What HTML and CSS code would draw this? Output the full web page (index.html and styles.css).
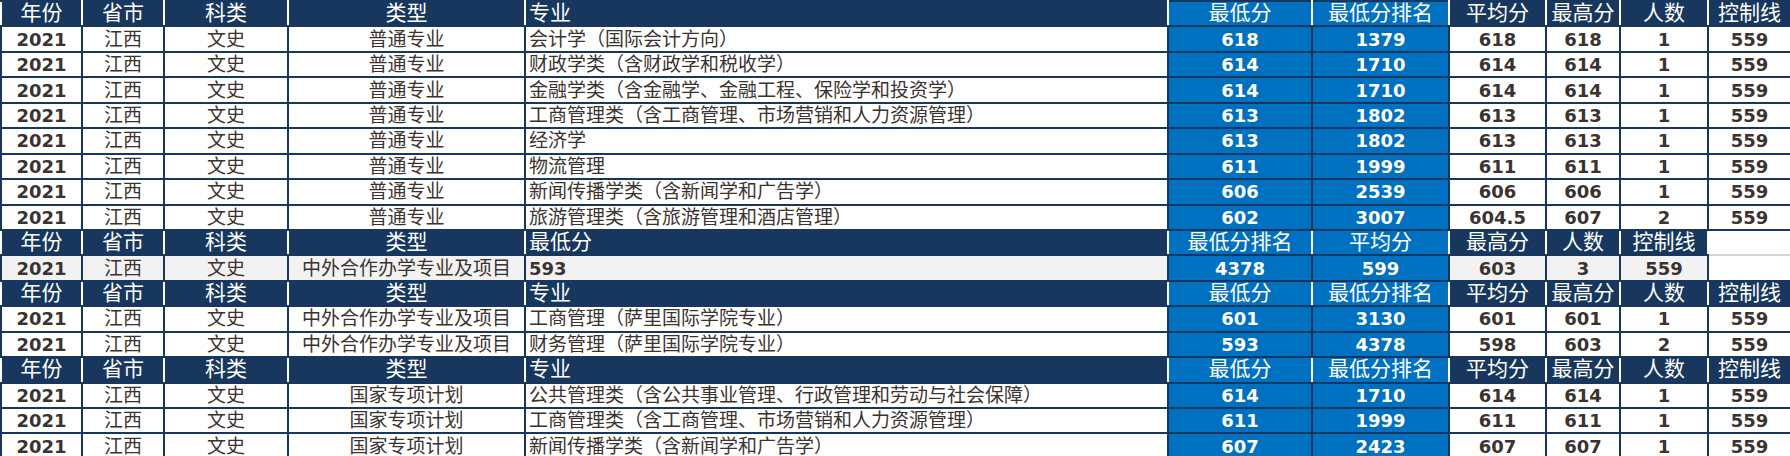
FILE: index.html
```html
<!DOCTYPE html>
<html lang="zh-CN">
<head>
<meta charset="utf-8">
<title>录取分数</title>
<link rel="stylesheet" href="styles.css">
</head>
<body>
<table class="grid">
<colgroup>
<col class="c1"><col class="c2"><col class="c3"><col class="c4"><col class="c5"><col class="c6"><col class="c7"><col class="c8"><col class="c9"><col class="c10"><col class="c11">
</colgroup>
<tbody>
<tr class="hr"><td>年份</td><td>省市</td><td>科类</td><td>类型</td><td class="l">专业</td><td class="hb">最低分</td><td class="hb">最低分排名</td><td>平均分</td><td>最高分</td><td>人数</td><td>控制线</td></tr>
<tr><td class="n">2021</td><td>江西</td><td>文史</td><td>普通专业</td><td class="l">会计学（国际会计方向）</td><td class="b">618</td><td class="b">1379</td><td class="n">618</td><td class="n">618</td><td class="n">1</td><td class="n">559</td></tr>
<tr><td class="n">2021</td><td>江西</td><td>文史</td><td>普通专业</td><td class="l">财政学类（含财政学和税收学）</td><td class="b">614</td><td class="b">1710</td><td class="n">614</td><td class="n">614</td><td class="n">1</td><td class="n">559</td></tr>
<tr><td class="n">2021</td><td>江西</td><td>文史</td><td>普通专业</td><td class="l">金融学类（含金融学、金融工程、保险学和投资学）</td><td class="b">614</td><td class="b">1710</td><td class="n">614</td><td class="n">614</td><td class="n">1</td><td class="n">559</td></tr>
<tr><td class="n">2021</td><td>江西</td><td>文史</td><td>普通专业</td><td class="l">工商管理类（含工商管理、市场营销和人力资源管理）</td><td class="b">613</td><td class="b">1802</td><td class="n">613</td><td class="n">613</td><td class="n">1</td><td class="n">559</td></tr>
<tr><td class="n">2021</td><td>江西</td><td>文史</td><td>普通专业</td><td class="l">经济学</td><td class="b">613</td><td class="b">1802</td><td class="n">613</td><td class="n">613</td><td class="n">1</td><td class="n">559</td></tr>
<tr><td class="n">2021</td><td>江西</td><td>文史</td><td>普通专业</td><td class="l">物流管理</td><td class="b">611</td><td class="b">1999</td><td class="n">611</td><td class="n">611</td><td class="n">1</td><td class="n">559</td></tr>
<tr><td class="n">2021</td><td>江西</td><td>文史</td><td>普通专业</td><td class="l">新闻传播学类（含新闻学和广告学）</td><td class="b">606</td><td class="b">2539</td><td class="n">606</td><td class="n">606</td><td class="n">1</td><td class="n">559</td></tr>
<tr><td class="n">2021</td><td>江西</td><td>文史</td><td>普通专业</td><td class="l">旅游管理类（含旅游管理和酒店管理）</td><td class="b">602</td><td class="b">3007</td><td class="n">604.5</td><td class="n">607</td><td class="n">2</td><td class="n">559</td></tr>

<tr class="hr"><td>年份</td><td>省市</td><td>科类</td><td>类型</td><td class="l">最低分</td><td class="hb">最低分排名</td><td class="hb">平均分</td><td>最高分</td><td>人数</td><td>控制线</td><td class="w"></td></tr>
<tr class="gr"><td class="n">2021</td><td>江西</td><td>文史</td><td>中外合作办学专业及项目</td><td class="l n">593</td><td class="b">4378</td><td class="b">599</td><td class="n">603</td><td class="n">3</td><td class="n">559</td><td class="w"></td></tr>

<tr class="hr"><td>年份</td><td>省市</td><td>科类</td><td>类型</td><td class="l">专业</td><td class="hb">最低分</td><td class="hb">最低分排名</td><td>平均分</td><td>最高分</td><td>人数</td><td>控制线</td></tr>
<tr><td class="n">2021</td><td>江西</td><td>文史</td><td>中外合作办学专业及项目</td><td class="l">工商管理（萨里国际学院专业）</td><td class="b">601</td><td class="b">3130</td><td class="n">601</td><td class="n">601</td><td class="n">1</td><td class="n">559</td></tr>
<tr><td class="n">2021</td><td>江西</td><td>文史</td><td>中外合作办学专业及项目</td><td class="l">财务管理（萨里国际学院专业）</td><td class="b">593</td><td class="b">4378</td><td class="n">598</td><td class="n">603</td><td class="n">2</td><td class="n">559</td></tr>

<tr class="hr"><td>年份</td><td>省市</td><td>科类</td><td>类型</td><td class="l">专业</td><td class="hb">最低分</td><td class="hb">最低分排名</td><td>平均分</td><td>最高分</td><td>人数</td><td>控制线</td></tr>
<tr><td class="n">2021</td><td>江西</td><td>文史</td><td>国家专项计划</td><td class="l">公共管理类（含公共事业管理、行政管理和劳动与社会保障）</td><td class="b">614</td><td class="b">1710</td><td class="n">614</td><td class="n">614</td><td class="n">1</td><td class="n">559</td></tr>
<tr><td class="n">2021</td><td>江西</td><td>文史</td><td>国家专项计划</td><td class="l">工商管理类（含工商管理、市场营销和人力资源管理）</td><td class="b">611</td><td class="b">1999</td><td class="n">611</td><td class="n">611</td><td class="n">1</td><td class="n">559</td></tr>
<tr><td class="n">2021</td><td>江西</td><td>文史</td><td>国家专项计划</td><td class="l">新闻传播学类（含新闻学和广告学）</td><td class="b">607</td><td class="b">2423</td><td class="n">607</td><td class="n">607</td><td class="n">1</td><td class="n">559</td></tr>
</tbody>
</table>
</body>
</html>
```

FILE: styles.css
```css
html, body {
  margin: 0;
  padding: 0;
  background: #ffffff;
}
body {
  width: 1790px;
  height: 456px;
  overflow: hidden;
}
.grid {
  border-collapse: collapse;
  table-layout: fixed;
  width: 1790px;
}
.c1 { width: 81px; }
.c2 { width: 82px; }
.c3 { width: 124px; }
.c4 { width: 237px; }
.c5 { width: 643px; }
.c6 { width: 144px; }
.c7 { width: 137px; }
.c8 { width: 97px; }
.c9 { width: 74px; }
.c10 { width: 88px; }
.c11 { width: 83px; }

.grid tr {
  height: 25.45px;
}
.grid td {
  padding: 0;
  border: 2px solid #17375e;
  text-align: center;
  vertical-align: middle;
  white-space: nowrap;
  overflow: hidden;
  font-family: "Liberation Serif", "Noto Sans CJK SC", serif;
  font-size: 19px;
  line-height: 21px;
  color: #3b3330;
  background: #ffffff;
}
.grid td.l {
  text-align: left;
  padding-left: 3px;
}
.grid td.n {
  font-family: "DejaVu Sans", "Noto Sans CJK SC", sans-serif;
  font-weight: bold;
  font-size: 18px;
}
.grid td.b {
  background: #0070c0;
  color: #ffffff;
  font-family: "DejaVu Sans", "Noto Sans CJK SC", sans-serif;
  font-weight: bold;
  font-size: 18px;
}
.grid .hr td {
  background: #17375e;
  color: #ffffff;
  font-size: 21px;
  border-left-color: #ffffff;
  border-right-color: #ffffff;
}
.grid .hr td.hb {
  background: #0070c0;
}
.grid .gr td {
  background: #f2f2f2;
}
.grid .gr td.b {
  background: #0070c0;
}
.grid .hr td.w,
.grid .gr td.w {
  background: #ffffff;
  border-right-color: #ffffff;
}
.grid .hr td.w {
  border-bottom-color: #d4d4d4;
}
.grid .gr td.w {
  border-top-color: #d4d4d4;
}
```
